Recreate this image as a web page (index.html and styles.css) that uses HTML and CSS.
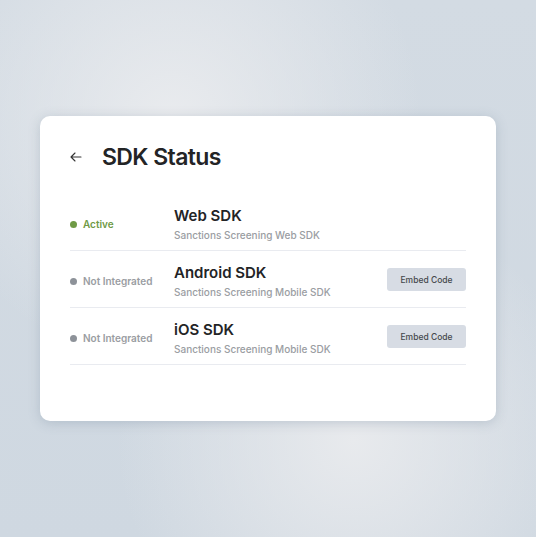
FILE: index.html
```html
<!DOCTYPE html>
<html lang="en">
<head>
    <meta charset="UTF-8">
    <meta name="viewport" content="width=device-width, initial-scale=1.0">
    <title>SDK Status</title>
    <link rel="stylesheet" href="styles.css">
</head>
<body>
    <div class="card">
        <div class="card-header">
            <a href="#back" class="back-link">
                <svg width="12" height="10" viewBox="0 0 12 10" fill="none" stroke="#333" stroke-width="1.1" stroke-linecap="round" stroke-linejoin="round">
                    <path d="M11 5H1.2M5 1L1 5l4 4"/>
                </svg>
            </a>
            <h1 class="title">SDK Status</h1>
        </div>

        <ul class="sdk-list">
            <li class="sdk-row">
                <div class="status active"><span class="dot"></span>Active</div>
                <div class="sdk-info">
                    <div class="sdk-name">Web SDK</div>
                    <div class="sdk-desc">Sanctions Screening Web SDK</div>
                </div>
            </li>
            <li class="sdk-row">
                <div class="status"><span class="dot"></span>Not Integrated</div>
                <div class="sdk-info">
                    <div class="sdk-name">Android SDK</div>
                    <div class="sdk-desc">Sanctions Screening Mobile SDK</div>
                </div>
                <button class="embed-btn">Embed Code</button>
            </li>
            <li class="sdk-row">
                <div class="status"><span class="dot"></span>Not Integrated</div>
                <div class="sdk-info">
                    <div class="sdk-name">iOS SDK</div>
                    <div class="sdk-desc">Sanctions Screening Mobile SDK</div>
                </div>
                <button class="embed-btn">Embed Code</button>
            </li>
        </ul>
    </div>
</body>
</html>
```

FILE: styles.css
```css
:root {
    --text-dark: #232426;
    --text-muted: #9a9da2;
    --active-color: #6f9a45;
    --idle-color: #8d9299;
    --divider: #e9ebf0;
    --button-bg: #d7dce4;
}

* {
    margin: 0;
    padding: 0;
    box-sizing: border-box;
}

html, body {
    height: 100%;
}

body {
    font-family: 'Inter', 'Noto Sans', sans-serif;
    background-color: #cdd6df;
    background-image:
        radial-gradient(circle at 32% 22%, #e9ebee 0, rgba(233, 235, 238, 0) 45%),
        radial-gradient(circle at 66% 82%, #e8eaed 0, rgba(232, 234, 237, 0) 42%),
        linear-gradient(180deg, #d3dbe3 0%, #cfd8e1 100%);
    display: flex;
    justify-content: center;
    align-items: center;
}

.card {
    width: 456px;
    height: 305px;
    background: #fff;
    border-radius: 10px;
    box-shadow: 0 2px 12px rgba(110, 128, 148, 0.3);
    padding: 26px 30px 0;
}

.card-header {
    display: flex;
    align-items: center;
    height: 30px;
}

.back-link {
    display: flex;
    align-items: center;
    width: 12px;
    margin-right: 20px;
    margin-top: -1px;
}

.title {
    font-size: 23px;
    font-weight: 600;
    line-height: 30px;
    color: var(--text-dark);
    letter-spacing: -0.6px;
}

.sdk-list {
    list-style-type: none;
    margin-top: 22px;
}

.sdk-row {
    display: flex;
    align-items: center;
    height: 57px;
    border-bottom: 1px solid var(--divider);
}

.status {
    display: flex;
    align-items: center;
    width: 104px;
    margin-top: 4px;
    font-size: 10px;
    font-weight: 600;
    color: var(--text-muted);
}

.status .dot {
    width: 7px;
    height: 7px;
    border-radius: 50%;
    background-color: var(--idle-color);
    margin-right: 6px;
}

.status.active {
    color: var(--active-color);
}

.status.active .dot {
    background-color: var(--active-color);
}

.sdk-info {
    flex: 1;
    margin-top: 3px;
}

.sdk-name {
    font-size: 15px;
    font-weight: 600;
    line-height: 20px;
    color: var(--text-dark);
}

.sdk-desc {
    font-size: 10px;
    font-weight: 500;
    line-height: 13px;
    margin-top: 3px;
    color: var(--text-muted);
}

.embed-btn {
    font-family: inherit;
    width: 79px;
    height: 23px;
    padding-top: 2px;
    border: none;
    border-radius: 3px;
    background-color: var(--button-bg);
    color: #45484d;
    font-size: 8.5px;
    font-weight: 500;
    cursor: pointer;
}
```
